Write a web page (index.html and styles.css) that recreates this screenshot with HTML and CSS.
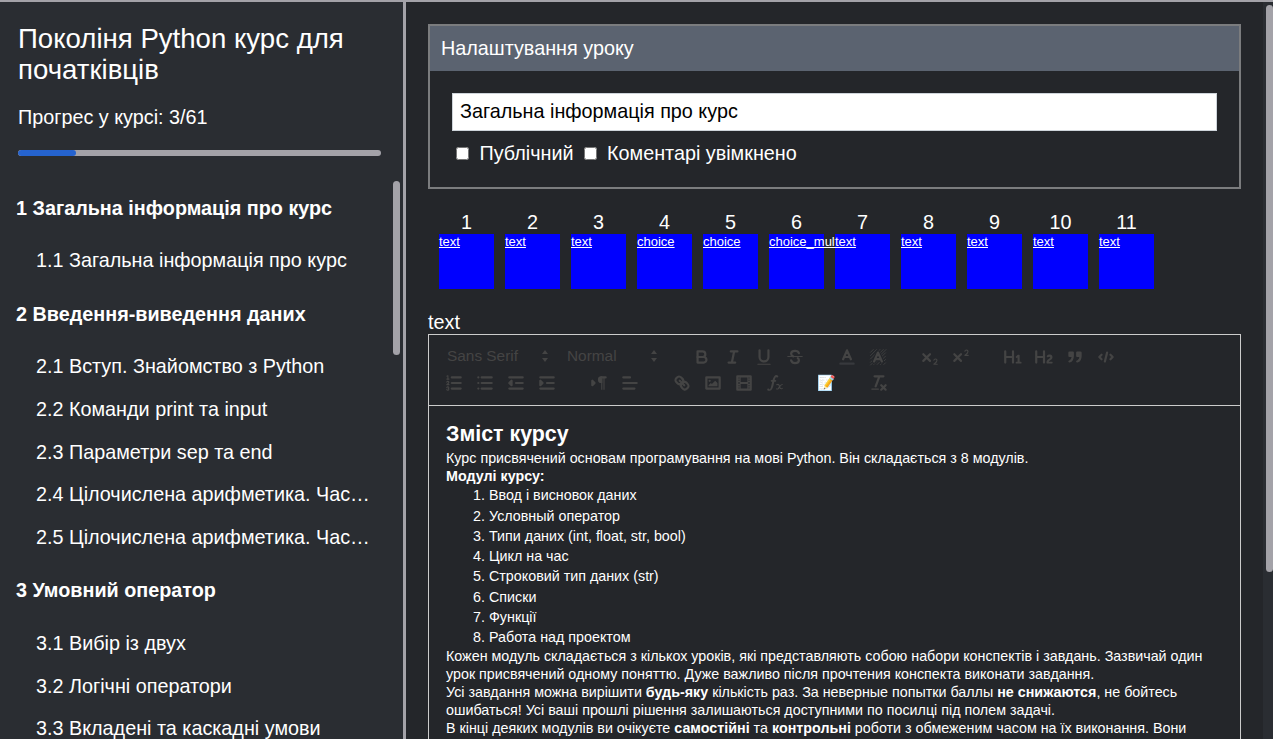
FILE: index.html
```html
<!DOCTYPE html>
<html lang="uk">
<head>
<meta charset="utf-8">
<title>Поколіня Python курс для початківців</title>
<link rel="stylesheet" href="styles.css">
</head>
<body>
<div class="app">
  <aside class="sidebar">
    <header class="side-head">
      <h1 class="course-title">Поколіня Python курс для початківців</h1>
      <p class="progress-label">Прогрес у курсі: 3/61</p>
      <div class="progress"><div class="progress-fill"></div></div>
    </header>
    <nav class="toc">
      <h2 class="mod">1 Загальна інформація про курс</h2>
      <a class="lesson">1.1 Загальна інформація про курс</a>
      <h2 class="mod">2 Введення-виведення даних</h2>
      <a class="lesson">2.1 Вступ. Знайомство з Python</a>
      <a class="lesson">2.2 Команди print та input</a>
      <a class="lesson">2.3 Параметри sep та end</a>
      <a class="lesson">2.4 Цілочислена арифметика. Частина 1</a>
      <a class="lesson">2.5 Цілочислена арифметика. Частина 2</a>
      <h2 class="mod">3 Умовний оператор</h2>
      <a class="lesson">3.1 Вибір із двух</a>
      <a class="lesson">3.2 Логічні оператори</a>
      <a class="lesson">3.3 Вкладені та каскадні умови</a>
    </nav>
    <div class="toc-thumb"></div>
  </aside>
  <main class="main">
    <section class="settings">
      <div class="settings-head">Налаштування уроку</div>
      <div class="settings-body">
        <input class="title-input" type="text" value="Загальна інформація про курс">
        <div class="checks">
          <label class="check"><input type="checkbox">Публічний</label>
          <label class="check"><input type="checkbox">Коментарі увімкнено</label>
        </div>
      </div>
    </section>
    <div class="steps">
      <div class="step"><span class="num">1</span><div class="box"><a href="#">text</a></div></div>
      <div class="step"><span class="num">2</span><div class="box"><a href="#">text</a></div></div>
      <div class="step"><span class="num">3</span><div class="box"><a href="#">text</a></div></div>
      <div class="step"><span class="num">4</span><div class="box"><a href="#">choice</a></div></div>
      <div class="step"><span class="num">5</span><div class="box"><a href="#">choice</a></div></div>
      <div class="step"><span class="num">6</span><div class="box"><a href="#">choice_multiple</a></div></div>
      <div class="step"><span class="num">7</span><div class="box"><a href="#">text</a></div></div>
      <div class="step"><span class="num">8</span><div class="box"><a href="#">text</a></div></div>
      <div class="step"><span class="num">9</span><div class="box"><a href="#">text</a></div></div>
      <div class="step"><span class="num">10</span><div class="box"><a href="#">text</a></div></div>
      <div class="step"><span class="num">11</span><div class="box"><a href="#">text</a></div></div>
    </div>
    <div class="step-type">text</div>
    <section class="editor">
      <div class="toolbar">
        <div class="tool-row">
          <span class="picker p-font">Sans Serif<svg class="updown" viewBox="0 0 8 14"><path d="M4 1 7 5H1zM4 13 1 9h6z"/></svg></span>
          <span class="picker p-size">Normal<svg class="updown" viewBox="0 0 8 14"><path d="M4 1 7 5H1zM4 13 1 9h6z"/></svg></span>
          <span class="tool g"><svg viewBox="0 0 18 18"><path d="M5,4H9.5A2.5,2.5,0,0,1,12,6.5v0A2.5,2.5,0,0,1,9.5,9H5V4Z"/><path d="M5,9h5.5A2.5,2.5,0,0,1,13,11.5v0A2.5,2.5,0,0,1,10.5,14H5V9Z"/></svg></span>
          <span class="tool"><svg viewBox="0 0 18 18"><path d="M7 4h6M5 14h6M8 14l2-10"/></svg></span>
          <span class="tool"><svg viewBox="0 0 18 18"><path d="M5,3V9a4,4,0,0,0,4,4h0a4,4,0,0,0,4-4V3"/><rect class="solid" height="1" rx=".5" width="12" x="3" y="15"/></svg></span>
          <span class="tool"><svg viewBox="0 0 18 18"><path class="thin" d="M2.500 8.500h13"/><path d="M12.500 5.500C12 4 10.500 3.500 9 3.500 7 3.500 5.500 4.500 5.500 6c0 1.200.8 2 2 2.500M5.500 12c.5 1.500 2 2.500 3.500 2.500 2 0 3.500-1 3.500-2.500 0-.8-.3-1.500-1-2"/></svg></span>
          <span class="tool g"><svg viewBox="0 0 18 18"><path class="faint" d="M3 15h12"/><path d="M5.500 11 9 3l3.500 8M11.630 9H6.380"/></svg></span>
          <span class="tool"><svg viewBox="0 0 18 18"><path class="hatchlines" d="M2 5 5 2M2 8 8 2M2 11 11 2M2 14 14 2M2 16.500 16.500 2M5 16 16 5M8 16l8-8M11 16l5-5M14 16l2-2"/><path class="halo" d="M5.500 13 9 5l3.500 8M11.630 11H6.380"/><path d="M5.500 13 9 5l3.500 8M11.630 11H6.380"/></svg></span>
          <span class="tool g"><svg viewBox="0 0 18 18"><path class="solid" d="M15.5,15H13.861a3.858,3.858,0,0,0,1.914-2.975,1.8,1.8,0,0,0-1.6-1.751A1.921,1.921,0,0,0,12.021,11.7a0.50013,0.50013,0,1,0,.957.291h0a0.914,0.914,0,0,1,1.053-.725,0.81,0.81,0,0,1,.744.762c0,1.076-1.16971,1.86982-1.93971,2.43082A1.45639,1.45639,0,0,0,12,15.5a0.5,0.5,0,0,0,.5.5h3A0.5,0.5,0,0,0,15.5,15Z"/><path d="M3 6.500 9 12.500M9 6.500 3 12.500"/></svg></span>
          <span class="tool"><svg viewBox="0 0 18 18"><path class="solid" d="M15.5,7H13.861a4.015,4.015,0,0,0,1.914-2.975,1.8,1.8,0,0,0-1.6-1.751A1.922,1.922,0,0,0,12.021,3.7a0.5,0.5,0,1,0,.957.291,0.917,0.917,0,0,1,1.053-.725,0.81,0.81,0,0,1,.744.762c0,1.077-1.164,1.925-1.934,2.486A1.423,1.423,0,0,0,12,7.500a0.5,0.5,0,0,0,.5.5h3A0.5,0.5,0,0,0,15.5,7Z"/><path d="M3 6.500 9 12.500M9 6.500 3 12.500"/></svg></span>
          <span class="tool g"><svg viewBox="0 0 18 18"><path class="solid" d="M10,4V14a1,1,0,0,1-2,0V10H3v4a1,1,0,0,1-2,0V4A1,1,0,0,1,3,4V8H8V4a1,1,0,0,1,2,0Zm6.06787,9.209H14.98975V7.59863a.54085.54085,0,0,0-.605-.60547h-.62744a1.01119,1.01119,0,0,0-.748.29688L11.645,8.56641a.5435.5435,0,0,0-.022.8584l.28613.30762a.53861.53861,0,0,0,.84717.0332l.09912-.08789a1.2137,1.2137,0,0,0,.2417-.35254h.02246s-.01123.30859-.01123.60547V13.209H12.041a.54085.54085,0,0,0-.605.60547v.43945a.54085.54085,0,0,0,.605.60547h4.02686a.54085.54085,0,0,0,.605-.60547v-.43945A.54085.54085,0,0,0,16.06787,13.209Z"/></svg></span>
          <span class="tool"><svg viewBox="0 0 18 18"><path class="solid" d="M16.73975,13.81445v.43945a.54085.54085,0,0,1-.605.60547H11.855a.58392.58392,0,0,1-.64893-.60547V14.0127c0-2.90527,3.39941-3.42187,3.39941-4.55469a.77675.77675,0,0,0-.84717-.78125,1.17684,1.17684,0,0,0-.83594.38477c-.2749.26367-.561.374-.85791.13184l-.4292-.34082c-.30811-.24219-.38525-.51758-.1543-.81445a2.97155,2.97155,0,0,1,2.45361-1.17676,2.45393,2.45393,0,0,1,2.68408,2.40918c0,2.45312-3.1792,2.92676-3.27832,3.93848h2.79443A.54085.54085,0,0,1,16.73975,13.81445ZM9,3A.99974.99974,0,0,0,8,4V8H3V4A1,1,0,0,0,1,4V14a1,1,0,0,0,2,0V10H8v4a1,1,0,0,0,2,0V4A.99974.99974,0,0,0,9,3Z"/></svg></span>
          <span class="tool"><svg viewBox="0 0 18 18"><path class="filled" d="M4 5h3v3H4zM11 5h3v3h-3zM7 8c0 4.031-3 5-3 5M14 8c0 4.031-3 5-3 5"/></svg></span>
          <span class="tool"><svg viewBox="0 0 18 18"><path d="M5 7 3 9l2 2M13 7l2 2-2 2M10 5 8 13"/></svg></span>
        </div>
        <div class="tool-row row-two">
          <span class="tool"><svg viewBox="0 0 18 18"><path d="M7 4h8M7 9h8M7 14h8"/><path class="thin" d="M2.500 5.500h2"/><path class="solid" d="M3.500,6A0.5,0.5,0,0,1,3,5.500V3.085l-0.276.138A0.5,0.5,0,0,1,2.053,3c-0.124-.247-0.023-0.324.224-0.447l1-.5A0.5,0.500,0,0,1,4,2.500v3A0.5,0.5,0,0,1,3.500,6Z"/><path class="thin" d="M4.500,10.500h-2c0-.234,1.85-1.076,1.85-2.234A0.959,0.959,0,0,0,2.500,8.156M2.500,14.846a0.959,0.959,0,0,0,1.85-.109A0.7,0.7,0,0,0,3.750,14a0.688,0.688,0,0,0,.6-0.736,0.959,0.959,0,0,0-1.85-.109"/></svg></span>
          <span class="tool"><svg viewBox="0 0 18 18"><path d="M6 4h9M6 9h9M6 14h9M3 4h.01M3 9h.01M3 14h.01"/></svg></span>
          <span class="tool"><svg viewBox="0 0 18 18"><path d="M3 14h12M3 4h12M9 9h6"/><path class="filled" d="M5 7v4L3 9z"/></svg></span>
          <span class="tool"><svg viewBox="0 0 18 18"><path d="M3 14h12M3 4h12M9 9h6"/><path class="filled" d="M3 7v4l2-2z"/></svg></span>
          <span class="tool g"><svg viewBox="0 0 18 18"><path class="filled" d="M3 11 5 9 3 7z"/><path d="M15 4h-4"/><path class="solid" d="M11,3a3,3,0,0,0,0,6h1V3H11Z"/><path class="solid" d="M11 4h1v11h-1zM13 4h1v11h-1z"/></svg></span>
          <span class="tool"><svg viewBox="0 0 18 18"><path d="M3 9h12M3 14h10M3 4h6"/></svg></span>
          <span class="tool g"><svg viewBox="0 0 18 18"><path d="M7 7l4 4"/><path d="M8.900,4.577a3.476,3.476,0,0,1,.36,4.679A3.476,3.476,0,0,1,4.577,8.900C3.185,7.500,2.035,6.400,4.217,4.217S7.500,3.185,8.900,4.577Z"/><path d="M13.423,9.100a3.476,3.476,0,0,0-4.679-.36,3.476,3.476,0,0,0,.36,4.679c1.392,1.392,2.500,2.542,4.679.36S14.815,10.500,13.423,9.100Z"/></svg></span>
          <span class="tool"><svg viewBox="0 0 18 18"><rect height="10" width="12" x="3" y="4"/><circle class="solid" cx="6" cy="7" r="1"/><path class="solid" d="M5 12v-1l2-2 1 1 3-3 2 2v3z"/></svg></span>
          <span class="tool"><svg viewBox="0 0 18 18"><rect height="12" width="12" x="3" y="3"/><path class="solid" d="M5 3h1v12H5zM12 3h1v12h-1zM5 8h8v2H5zM3 5h3v1H3zM3 7h3v1H3zM3 10h3v1H3zM3 12h3v1H3zM12 5h3v1h-3zM12 7h3v1h-3zM12 10h3v1h-3zM12 12h3v1h-3z"/></svg></span>
          <span class="tool"><svg viewBox="0 0 18 18"><path class="solid" d="M11.759,2.482a2.561,2.561,0,0,0-3.53.607A7.656,7.656,0,0,0,6.800,6.200C6.109,9.188,5.275,14.677,4.150,14.927a1.545,1.545,0,0,0-1.300-.933A0.922,0.922,0,0,0,2,15.036S1.954,16,4.119,16s3.091-2.691,3.700-5.553c0.177-.826.36-1.726,0.554-2.600L8.775,6.200c0.381-1.421.807-2.521,1.306-2.676a1.014,1.014,0,0,0,1.020.56A0.966,0.966,0,0,0,11.759,2.482Z"/><rect class="solid" height="1.600" rx="0.8" width="5" x="5.150" y="6.200"/><path class="thin" d="M10.500 10.500c1.500-.6 2-.3 2.500 1.500s1 2.600 2.500 1.900M15.500 10.300c-1.500 0-2.500 2.500-3.500 3.700-.5.500-1 .5-1.500.3"/></svg></span>
          <span class="tool g memo">📝</span>
          <span class="tool g"><svg viewBox="0 0 18 18"><path d="M5 3h8M6 12 9.350 3M11 11l4 4M15 11l-4 4"/><rect class="solid" height="1" rx=".5" width="7" x="2" y="14"/></svg></span>
        </div>
      </div>
      <div class="content">
        <h2 class="content-title">Зміст курсу</h2>
        <p>Курс присвячений основам програмування на мові Python. Він складається з 8 модулів.</p>
        <p><strong>Модулі курсу:</strong></p>
        <ol>
          <li>Ввод і висновок даних</li>
          <li>Условный оператор</li>
          <li>Типи даних (int, float, str, bool)</li>
          <li>Цикл на час</li>
          <li>Строковий тип даних (str)</li>
          <li>Списки</li>
          <li>Функції</li>
          <li>Работа над проектом</li>
        </ol>
        <p>Кожен модуль складається з кількох уроків, які представляють собою набори конспектів і завдань. Зазвичай один урок присвячений одному поняттю. Дуже важливо після прочтения конспекта виконати завдання.</p>
        <p>Усі завдання можна вирішити <strong>будь-яку</strong> кількість раз. За неверные попытки баллы <strong>не снижаются</strong>, не бойтесь ошибаться! Усі ваші прошлі рішення залишаються доступними по посилці під полем задачі.</p>
        <p>В кінці деяких модулів ви очікуєте <strong>самостійні</strong> та <strong>контрольні</strong> роботи з обмеженим часом на їх виконання. Вони</p>
      </div>
    </section>
    <div class="main-track"><div class="main-thumb"></div></div>
  </main>
</div>
</body>
</html>
```
FILE: styles.css
```css
* { box-sizing: border-box; }
html, body { margin: 0; height: 100%; overflow: hidden; }
body {
  font-family: "Liberation Sans", Arial, sans-serif;
  color: #fff;
  background: #24262a;
}
.app {
  display: flex;
  height: 100vh;
  border-top: 2px solid #a3a2a8;
}
.sidebar {
  position: relative;
  width: 406px;
  flex: none;
  display: flex;
  flex-direction: column;
  background: #2a2d32;
  border-right: 3px solid #a3a2a8;
  min-height: 0;
}
.side-head { padding: 21px 22px 0 18px; }
.course-title {
  margin: 0;
  font-size: 27.6px;
  line-height: 31px;
  font-weight: 400;
}
.progress-label { margin: 21px 0 0; font-size: 19.8px; line-height: 22px; }
.progress {
  height: 6px;
  margin-top: 22px;
  border-radius: 3px;
  background: #a3a2a8;
  overflow: hidden;
}
.progress-fill { width: 16%; height: 100%; border-radius: 3px; background: #2563cf; }
.toc {
  flex: 1;
  min-height: 0;
  margin-top: 23px;
  overflow: hidden;
}
.toc-thumb {
  position: absolute;
  left: 393px;
  top: 179px;
  width: 7px;
  height: 174px;
  border-radius: 3.5px;
  background: #a3a2a8;
}
.mod {
  margin: 0;
  padding: 16px 24px 18.4px 16px;
  font-size: 19.8px;
  line-height: 26px;
  font-weight: 700;
  white-space: nowrap;
}
.lesson {
  display: block;
  padding: 9px 32px 8px 36px;
  font-size: 19.8px;
  line-height: 25.8px;
  white-space: nowrap;
  overflow: hidden;
  text-overflow: ellipsis;
}
.lesson + .mod { margin-top: 2.4px; }
.main {
  position: relative;
  flex: 1;
  min-width: 0;
  overflow: hidden;
  padding: 22px 32px 30px 22px;
  background: #24262a;
}
.main-track {
  position: absolute;
  top: 0;
  right: 0;
  bottom: 0;
  width: 10px;
  padding-left: 3px;
  padding-top: 3px;
  background: #2a2d32;
}
.main-thumb { height: 567px; border-radius: 3.5px; background: #a3a2a8; }
.settings { border: 2px solid #7b7c7e; }
.settings-head {
  height: 45px;
  padding: 0 11px;
  background: #5b6370;
  font-size: 19.8px;
  line-height: 45px;
}
.settings-body { height: 116px; padding: 22px 22px 0; }
.title-input {
  display: block;
  width: 100%;
  height: 38px;
  padding: 0 7px 2px;
  border: 1px solid #ced4da;
  border-radius: 0;
  outline: 0;
  background: #fff;
  color: #000;
  font: 19.8px "Liberation Sans", Arial, sans-serif;
}
.checks { display: flex; gap: 6px; margin-top: 9px; }
.check { display: flex; align-items: center; font-size: 19.8px; line-height: 26px; }
.check input { flex: none; width: 13px; height: 13px; margin: 0 10.5px 0 4px; }
.steps { display: flex; gap: 11px; margin-top: 23px; padding-left: 11px; }
.step { width: 55px; flex: none; display: flex; flex-direction: column; }
.num { padding-bottom: 2px; font-size: 19.8px; line-height: 20px; text-align: center; }
.box { height: 55px; background: #00f; font-size: 13px; line-height: 15px; white-space: nowrap; }
.box a { color: #fff; text-decoration: underline; }
.step-type { margin-top: 21px; font-size: 19.8px; line-height: 24px; }
.editor { border: 1px solid #ccc; }
.toolbar { height: 71px; padding: 8px 0 0 9px; border-bottom: 1px solid #ccc; }
.tool-row { display: flex; align-items: center; height: 27px; }
.row-two { margin-top: -1px; }
.tool {
  display: flex;
  align-items: center;
  justify-content: center;
  width: 31px;
  height: 27px;
  flex: none;
}
.tool svg { display: block; width: 20px; height: 20px; fill: none; stroke: #444; stroke-width: 2; stroke-linecap: round; stroke-linejoin: round; }
.tool svg .thin { stroke-width: 1; }
.tool svg .solid { fill: #444; stroke: none; }
.tool svg .filled { fill: #444; }
.tool svg .faint { stroke: #37393d; }
.tool svg .hatchlines { stroke-width: .7; stroke-linecap: butt; }
.tool svg .halo { stroke: #24262a; stroke-width: 4; }
.tool.g { margin-left: 21px; }
.picker { display: flex; align-items: center; justify-content: space-between; flex: none; padding-bottom: 2px; color: #444; font-size: 15.4px; }
.p-font { width: 120px; padding-left: 9px; padding-right: 9px; }
.p-size { width: 107px; padding-left: 9px; padding-right: 7px; }
.updown { width: 8px; height: 14px; fill: #444; }
.memo { font-size: 15px; }
.content { padding: 15px 17px 14px; font-size: 14.3px; line-height: 18px; }
.content-title { margin: 0 0 1px; font-size: 21.4px; line-height: 27px; font-weight: 700; }
.content p { margin: 0; }
.content ol { margin: .3px 0 -.3px; padding-left: 43px; }
.content li { line-height: 20.3px; }
```
